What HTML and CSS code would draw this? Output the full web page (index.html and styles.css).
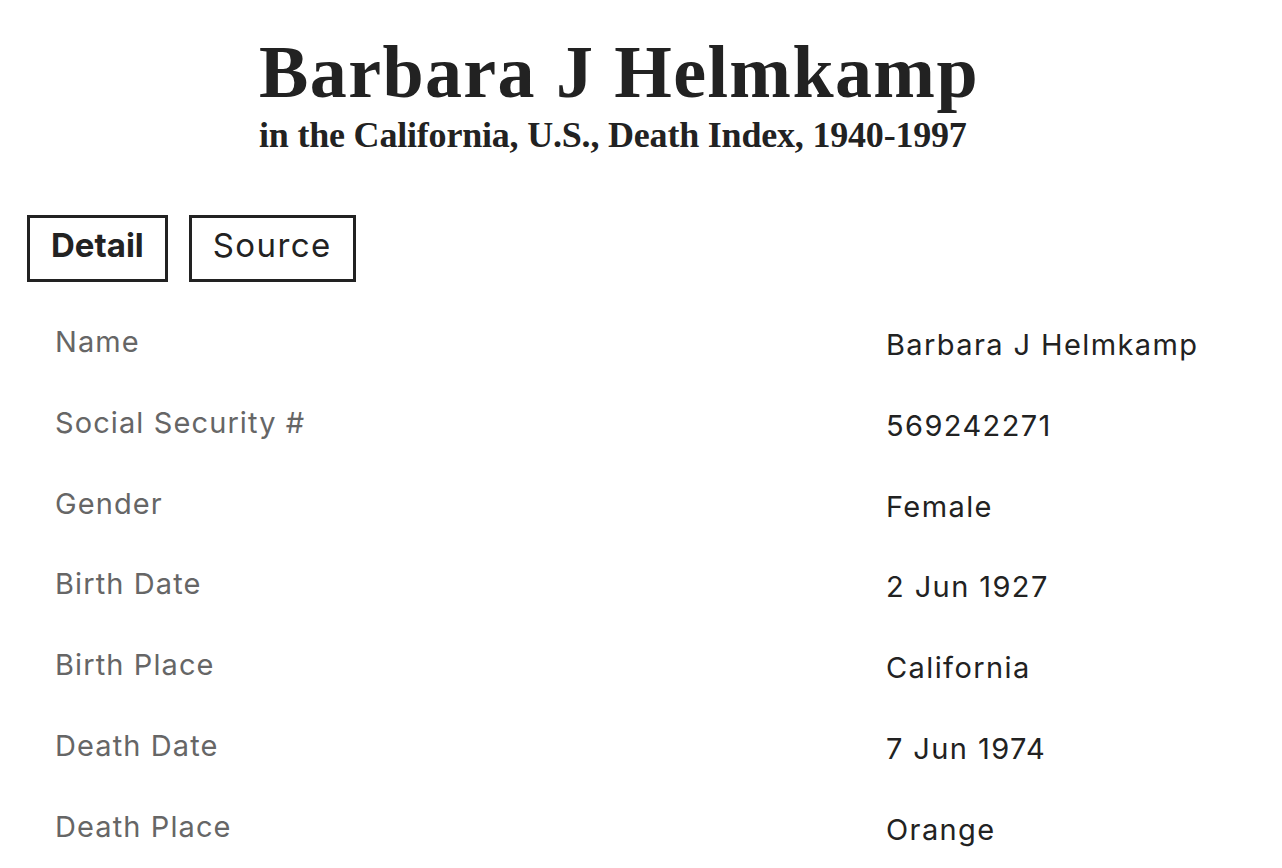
FILE: index.html
```html
<!DOCTYPE html>
<html lang="en">
<head>
<meta charset="utf-8">
<title>Barbara J Helmkamp</title>
<link rel="stylesheet" href="styles.css">
</head>
<body>
<header class="page-header">
  <h1 class="title">Barbara J Helmkamp</h1>
  <p class="subtitle">in the California, U.S., Death Index, 1940-1997</p>
</header>
<nav class="tabs">
  <button class="tab tab-active">Detail</button>
  <button class="tab">Source</button>
</nav>
<dl class="details">
  <div class="row"><dt>Name</dt><dd>Barbara J Helmkamp</dd></div>
  <div class="row"><dt>Social Security #</dt><dd>569242271</dd></div>
  <div class="row"><dt>Gender</dt><dd>Female</dd></div>
  <div class="row"><dt>Birth Date</dt><dd>2 Jun 1927</dd></div>
  <div class="row"><dt>Birth Place</dt><dd>California</dd></div>
  <div class="row"><dt>Death Date</dt><dd>7 Jun 1974</dd></div>
  <div class="row"><dt>Death Place</dt><dd>Orange</dd></div>
</dl>
</body>
</html>
```
FILE: styles.css
```css
html, body {
  margin: 0;
  padding: 0;
  background: #ffffff;
}
body {
  font-family: Inter, "Noto Sans", sans-serif;
  color: #222222;
  overflow: hidden;
}
.page-header {
  padding: 30px 0 0 259px;
}
.title {
  margin: 0;
  font-family: "Liberation Serif", serif;
  font-weight: 700;
  font-size: 74px;
  line-height: 84px;
  letter-spacing: 1.4px;
  color: #222222;
}
.subtitle {
  margin: 0;
  font-family: "Liberation Serif", serif;
  font-weight: 700;
  font-size: 36px;
  line-height: 42px;
  letter-spacing: -0.2px;
  color: #222222;
}
.tabs {
  display: flex;
  gap: 21px;
  padding: 59px 0 0 27px;
}
.tab {
  font-family: Inter, sans-serif;
  font-size: 33px;
  letter-spacing: 1.4px;
  color: #222222;
  background: #fff;
  border: 3px solid #222222;
  height: 67px;
  padding: 0 21px 7px;
  font-weight: 400;
  cursor: pointer;
}
.tab-active {
  font-weight: 700;
  letter-spacing: 0;
}
.details {
  margin: 40px 0 0 0;
  padding: 0 0 0 55px;
}
.row {
  display: grid;
  grid-template-columns: 831px 1fr;
  height: 80.8px;
  align-items: start;
}
.row dt {
  font-size: 29px;
  letter-spacing: 1.1px;
  color: #666666;
  line-height: 40px;
}
.row dd {
  margin: 0;
  padding-top: 3px;
  font-size: 29px;
  letter-spacing: 1.4px;
  color: #222222;
  line-height: 40px;
}
```
